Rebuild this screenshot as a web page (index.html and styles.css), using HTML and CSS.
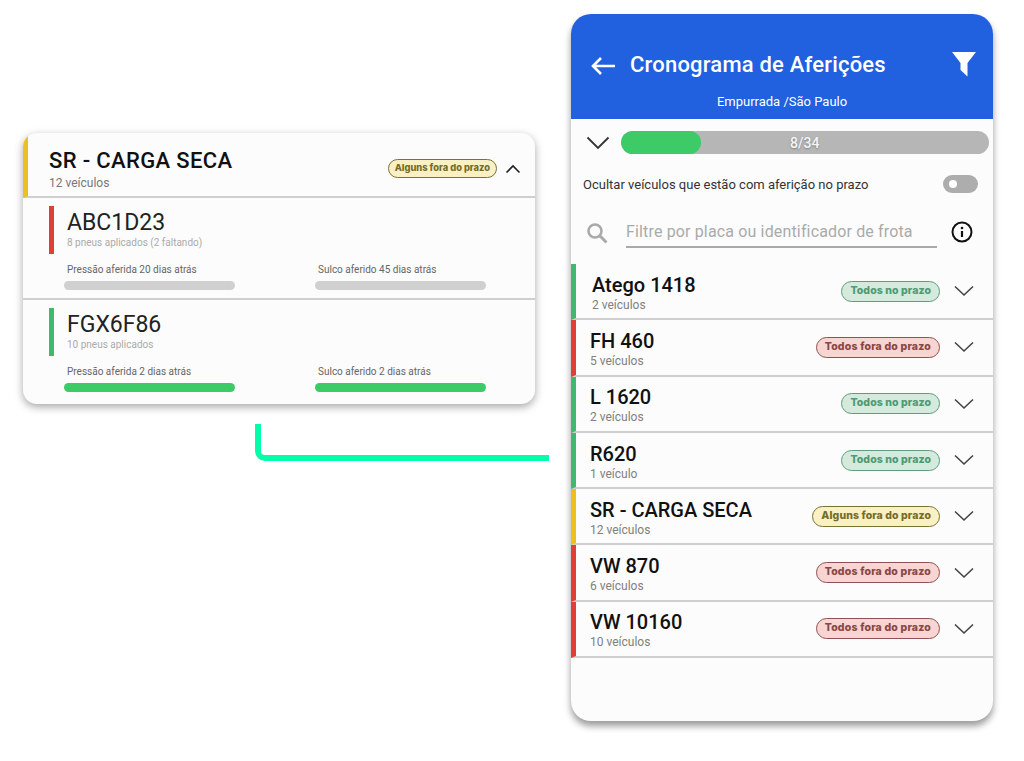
FILE: index.html
```html
<!DOCTYPE html>
<html lang="pt-BR">
<head>
  <meta charset="UTF-8">
  <meta name="viewport" content="width=device-width, initial-scale=1.0">
  <title>Cronograma de Aferições</title>
  <link rel="stylesheet" href="styles.css">
</head>
<body>
  <!-- Cartão expandido -->
  <section class="card">
    <div class="card-head">
      <div class="head-text">
        <div class="card-title">SR - CARGA SECA</div>
        <div class="card-sub">12 veículos</div>
      </div>
      <span class="badge badge-yellow badge-small">Alguns fora do prazo</span>
      <svg class="chevron-up" width="16" height="10" viewBox="0 0 16 10"><path d="M1.500 8.500 8 2l6.500 6.500" fill="none" stroke="#222" stroke-width="1.600"/></svg>
    </div>

    <div class="plate">
      <div class="plate-top">
        <span class="mark mark-red"></span>
        <div>
          <div class="plate-name">ABC1D23</div>
          <div class="plate-sub">8 pneus aplicados (2 faltando)</div>
        </div>
      </div>
      <div class="measures">
        <div class="measure">
          <div class="measure-label">Pressão aferida 20 dias atrás</div>
          <div class="bar bar-gray"></div>
        </div>
        <div class="measure">
          <div class="measure-label">Sulco aferido 45 dias atrás</div>
          <div class="bar bar-gray"></div>
        </div>
      </div>
    </div>

    <div class="plate plate-last">
      <div class="plate-top">
        <span class="mark mark-green"></span>
        <div>
          <div class="plate-name">FGX6F86</div>
          <div class="plate-sub">10 pneus aplicados</div>
        </div>
      </div>
      <div class="measures">
        <div class="measure">
          <div class="measure-label">Pressão aferida 2 dias atrás</div>
          <div class="bar bar-green"></div>
        </div>
        <div class="measure">
          <div class="measure-label">Sulco aferido 2 dias atrás</div>
          <div class="bar bar-green"></div>
        </div>
      </div>
    </div>
  </section>

  <div class="connector"></div>

  <!-- Tela do celular -->
  <section class="phone">
    <header class="phone-head">
      <div class="head-row">
        <svg class="back" width="26" height="20" viewBox="0 0 26 20"><path d="M25 10H3M11 2l-8 8 8 8" fill="none" stroke="#fff" stroke-width="2.600"/></svg>
        <h1>Cronograma de Aferições</h1>
        <svg class="filter" width="26" height="26" viewBox="0 0 26 26"><path d="M1 1h24l-8.500 11v13.500L9.500 19v-7z" fill="#fff"/></svg>
      </div>
      <div class="head-sub">Empurrada /São Paulo</div>
    </header>

    <div class="progress-row">
      <svg width="24" height="14" viewBox="0 0 24 14"><path d="M1.500 1.500 12 12 22.500 1.500" fill="none" stroke="#333" stroke-width="1.800"/></svg>
      <div class="progress">
        <div class="progress-fill" style="width: 21.700%"></div>
        <span class="progress-text">8/34</span>
      </div>
    </div>

    <div class="toggle-row">
      <span>Ocultar veículos que estão com aferição no prazo</span>
      <span class="toggle"><i></i></span>
    </div>

    <div class="search-row">
      <svg class="search-icon" width="22" height="22" viewBox="0 0 22 22"><circle cx="9" cy="9" r="6.500" fill="none" stroke="#aaa" stroke-width="2.600"/><path d="m14 14 6.500 6.500" stroke="#aaa" stroke-width="3"/></svg>
      <div class="search-input">Filtre por placa ou identificador de frota</div>
      <svg class="info" width="22" height="22" viewBox="0 0 22 22"><circle cx="11" cy="11" r="9.500" fill="none" stroke="#111" stroke-width="2"/><circle cx="11" cy="7" r="1.300" fill="#111"/><path d="M11 10v6" stroke="#111" stroke-width="2.200"/></svg>
    </div>

    <div class="rows">
      <div class="row row-green row-inset">
        <div class="row-text"><div class="row-name">Atego 1418</div><div class="row-sub">2 veículos</div></div>
        <span class="badge badge-green">Todos no prazo</span>
        <svg class="chevron" width="20" height="12" viewBox="0 0 20 12"><path d="M1 1.500 10 10l9-8.500" fill="none" stroke="#444" stroke-width="1.600"/></svg>
      </div>
      <div class="row row-red">
        <div class="row-text"><div class="row-name">FH 460</div><div class="row-sub">5 veículos</div></div>
        <span class="badge badge-red">Todos fora do prazo</span>
        <svg class="chevron" width="20" height="12" viewBox="0 0 20 12"><path d="M1 1.500 10 10l9-8.500" fill="none" stroke="#444" stroke-width="1.600"/></svg>
      </div>
      <div class="row row-green">
        <div class="row-text"><div class="row-name">L 1620</div><div class="row-sub">2 veículos</div></div>
        <span class="badge badge-green">Todos no prazo</span>
        <svg class="chevron" width="20" height="12" viewBox="0 0 20 12"><path d="M1 1.500 10 10l9-8.500" fill="none" stroke="#444" stroke-width="1.600"/></svg>
      </div>
      <div class="row row-green">
        <div class="row-text"><div class="row-name">R620</div><div class="row-sub">1 veículo</div></div>
        <span class="badge badge-green">Todos no prazo</span>
        <svg class="chevron" width="20" height="12" viewBox="0 0 20 12"><path d="M1 1.500 10 10l9-8.500" fill="none" stroke="#444" stroke-width="1.600"/></svg>
      </div>
      <div class="row row-yellow">
        <div class="row-text"><div class="row-name">SR - CARGA SECA</div><div class="row-sub">12 veículos</div></div>
        <span class="badge badge-yellow">Alguns fora do prazo</span>
        <svg class="chevron" width="20" height="12" viewBox="0 0 20 12"><path d="M1 1.500 10 10l9-8.500" fill="none" stroke="#444" stroke-width="1.600"/></svg>
      </div>
      <div class="row row-red">
        <div class="row-text"><div class="row-name">VW 870</div><div class="row-sub">6 veículos</div></div>
        <span class="badge badge-red">Todos fora do prazo</span>
        <svg class="chevron" width="20" height="12" viewBox="0 0 20 12"><path d="M1 1.500 10 10l9-8.500" fill="none" stroke="#444" stroke-width="1.600"/></svg>
      </div>
      <div class="row row-red">
        <div class="row-text"><div class="row-name">VW 10160</div><div class="row-sub">10 veículos</div></div>
        <span class="badge badge-red">Todos fora do prazo</span>
        <svg class="chevron" width="20" height="12" viewBox="0 0 20 12"><path d="M1 1.500 10 10l9-8.500" fill="none" stroke="#444" stroke-width="1.600"/></svg>
      </div>
    </div>
  </section>
</body>
</html>
```

FILE: styles.css
```css
* {
  box-sizing: border-box;
}
body {
  margin: 0;
  height: 761px;
  overflow: hidden;
  position: relative;
  background: #fff;
  font-family: Roboto, Arial, sans-serif;
  color: #111;
}

/* cartão da esquerda */
.card {
  position: absolute;
  left: 23px;
  top: 133px;
  width: 512px;
  height: 271px;
  background: #fcfcfc;
  border-radius: 14px;
  box-shadow: 0 3px 8px rgba(0, 0, 0, 0.35);
  overflow: hidden;
}
.card-head {
  height: 65px;
  display: flex;
  align-items: center;
  padding: 8px 14px 0 21px;
  border-left: 5px solid #ecc11f;
  border-bottom: 2px solid #cfcfcf;
}
.head-text {
  flex: 1;
}
.card-title {
  font-size: 22px;
  font-weight: 500;
  line-height: 26px;
  margin-top: 1px;
  letter-spacing: 0.35px;
}
.card-sub {
  font-size: 12px;
  line-height: 14px;
  margin-top: 2px;
  color: #777;
}
.chevron-up {
  margin-left: 8px;
}
.plate {
  height: 102px;
  border-bottom: 2px solid #cfcfcf;
  padding-top: 8px;
}
.plate-last {
  border-bottom: 0;
}
.plate-top {
  display: flex;
  height: 48px;
  padding-left: 26px;
  gap: 13px;
}
.mark {
  width: 5px;
  height: 48px;
}
.mark-red {
  background: #df4035;
}
.mark-green {
  background: #3fb96a;
}
.plate-name {
  font-size: 23px;
  line-height: 30px;
  margin-top: 2px;
  color: #222;
}
.plate-sub {
  font-size: 10px;
  line-height: 12px;
  margin-top: -1px;
  color: #aaa;
}
.measures {
  display: flex;
  margin-top: 10px;
  padding-left: 41px;
}
.measure {
  flex: none;
  width: 251px;
}
.measure-label {
  font-size: 10px;
  line-height: 12px;
  padding-left: 3px;
  color: #666;
}
.bar {
  width: 171px;
  height: 9px;
  margin-top: 5px;
  border-radius: 5px;
}
.bar-gray {
  background: #d0d0d0;
}
.bar-green {
  background: #3ccb67;
}

/* conector */
.connector {
  position: absolute;
  left: 255px;
  top: 424px;
  width: 294px;
  height: 37px;
  border-left: 6px solid #00ffa8;
  border-bottom: 6px solid #00ffa8;
  border-bottom-left-radius: 10px;
}

/* celular */
.phone {
  position: absolute;
  left: 571px;
  top: 14px;
  width: 422px;
  height: 707px;
  background: #fcfcfc;
  border-radius: 20px;
  box-shadow: 0 5px 7px rgba(0, 0, 0, 0.4);
  overflow: hidden;
}
.phone-head {
  height: 105px;
  background: #2160de;
  color: #fff;
  padding-top: 33px;
}
.head-row {
  display: flex;
  align-items: center;
  height: 34px;
  padding: 0 16px 0 19px;
}
.back {
  margin-top: 4px;
}
.head-row h1 {
  flex: 1;
  margin: 0 0 0 14px;
  font-size: 22px;
  font-weight: 500;
  letter-spacing: 0.2px;
}
.head-sub {
  margin-top: 13px;
  text-align: center;
  font-size: 13px;
  line-height: 16px;
}
.progress-row {
  display: flex;
  align-items: center;
  gap: 11px;
  height: 23px;
  margin-top: 12px;
  padding: 0 4px 0 15px;
}
.progress {
  position: relative;
  flex: 1;
  height: 23px;
  border-radius: 12px;
  background: #b6b6b6;
  overflow: hidden;
}
.progress-fill {
  height: 100%;
  border-radius: 12px;
  background: #3ccb67;
}
.progress-text {
  position: absolute;
  left: 169px;
  top: 3px;
  font-size: 14px;
  font-weight: 500;
  line-height: 18px;
  color: #f4f4f4;
  text-shadow: 0 1px 2px rgba(0, 0, 0, 0.3);
}
.toggle-row {
  display: flex;
  align-items: center;
  justify-content: space-between;
  height: 18px;
  margin-top: 21px;
  padding: 0 15px 0 12px;
  font-size: 13px;
  color: #333;
}
.toggle {
  display: flex;
  align-items: center;
  width: 35px;
  height: 18px;
  padding-left: 6px;
  border-radius: 9px;
  background: #adadad;
}
.toggle i {
  width: 8px;
  height: 8px;
  border-radius: 50%;
  background: #fff;
}
.search-row {
  display: flex;
  align-items: center;
  height: 34px;
  margin-top: 21px;
  padding-left: 15px;
}
.search-icon {
  margin: 4px 18px 0 0;
}
.search-input {
  width: 311px;
  height: 34px;
  border-bottom: 2px solid #aaa;
  font-size: 16px;
  line-height: 35px;
  letter-spacing: 0.15px;
  color: #aaa;
}
.info {
  margin: 2px 0 0 14px;
}
.rows {
  margin-top: 16px;
}
.row {
  display: flex;
  align-items: center;
  height: 56.300px;
  padding-right: 19px;
  padding-left: 14px;
  border-left: 5px solid #3fb96a;
  border-bottom: 2px solid #cfcfcf;
}
.row-inset {
  padding-left: 16px;
}
.row-green {
  border-left-color: #3fb96a;
}
.row-red {
  border-left-color: #df4035;
}
.row-yellow {
  border-left-color: #ecc11f;
}
.row-text {
  flex: 1;
}
.row-name {
  font-size: 20px;
  font-weight: 500;
  line-height: 24px;
  margin-top: 2px;
}
.row-sub {
  font-size: 12px;
  line-height: 14px;
  margin-top: 1px;
  color: #808080;
}
.badge {
  display: inline-block;
  height: 21px;
  padding: 0 8px;
  border: 1.500px solid;
  border-radius: 11px;
  font-family: Inter, "Open Sans", sans-serif;
  font-size: 10.500px;
  font-weight: 800;
  line-height: 18px;
  letter-spacing: 0.1px;
  white-space: nowrap;
}
.badge-small {
  height: 19px;
  font-size: 9.300px;
  line-height: 16px;
  letter-spacing: 0;
  padding: 0 6px;
}
.badge-green {
  background: #d3eadd;
  border-color: #5f9d7e;
  color: #4e9a74;
}
.badge-red {
  background: #f6d5d3;
  border-color: #8f5250;
  color: #8a4644;
  letter-spacing: 0.2px;
}
.badge-yellow {
  background: #f9f0c4;
  border-color: #7a7235;
  color: #756c27;
}
.chevron {
  margin-left: 14px;
}
```
